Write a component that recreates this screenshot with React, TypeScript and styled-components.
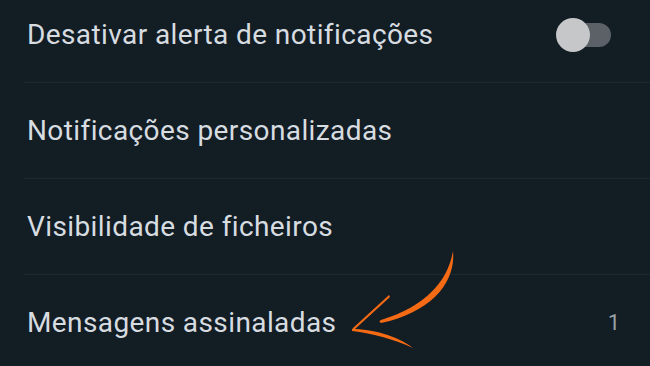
import React from "react";
import styled, { createGlobalStyle } from "styled-components";

const Global = createGlobalStyle`
  html, body { margin: 0; padding: 0; background: #121d24; overflow: hidden; }
  #root { width: 650px; height: 366px; }
`;

const Page = styled.div`
  position: relative;
  width: 650px;
  height: 366px;
  background: #121d24;
  overflow: hidden;
  font-family: Roboto, "Noto Sans", sans-serif;
`;

const List = styled.div`
  display: flex;
  flex-direction: column;
  margin-top: -13px;
`;

const Row = styled.div<{ $divider?: boolean }>`
  display: flex;
  align-items: center;
  height: 95px;
  padding: 0 28px 0 27px;
  position: relative;
  ${(p) =>
    p.$divider &&
    `&::after { content: ""; position: absolute; left: 24px; right: 0; bottom: -1px; height: 1px; background: #1d2930; }`}
  margin-bottom: 1px;
`;

const Label = styled.span`
  flex: 1;
  font-size: 28px;
  color: #d7dce0;
  letter-spacing: 0.4px;
`;

const Count = styled.span`
  font-size: 22px;
  color: #9aa1a7;
  margin-right: 2px;
`;

const Track = styled.div`
  position: relative;
  width: 51px;
  height: 24px;
  border-radius: 12px;
  background: #5b6166;
  margin-right: 11px;
`;

const Knob = styled.div`
  position: absolute;
  left: -4px;
  top: -5px;
  width: 34px;
  height: 34px;
  border-radius: 50%;
  background: #c5c7c9;
`;

const Arrow = styled.svg`
  position: absolute;
  left: 0;
  top: 0;
  pointer-events: none;
`;

export default function App() {
  return (
    <Page>
      <Global />
      <List>
        <Row $divider>
          <Label>Desativar alerta de notificações</Label>
          <Track>
            <Knob />
          </Track>
        </Row>
        <Row $divider>
          <Label>Notificações personalizadas</Label>
        </Row>
        <Row $divider>
          <Label>Visibilidade de ficheiros</Label>
        </Row>
        <Row>
          <Label>Mensagens assinaladas</Label>
          <Count>1</Count>
        </Row>
      </List>
      <Arrow width="650" height="366" viewBox="0 0 650 366">
        <path
          d="M453,251 C456,282 432,312 381,323 C379,322 379,321 381,320 C427,306 448,280 453,251 Z"
          fill="#f56a14"
        />
        <path
          d="M389,295 L353,328 L352,330 L355,329 L390,297 Z"
          fill="#f56a14"
        />
        <path
          d="M352,329 C372,329 398,336 413,348 C396,340 372,333 352,331 Z"
          fill="#f56a14"
        />
      </Arrow>
    </Page>
  );
}
